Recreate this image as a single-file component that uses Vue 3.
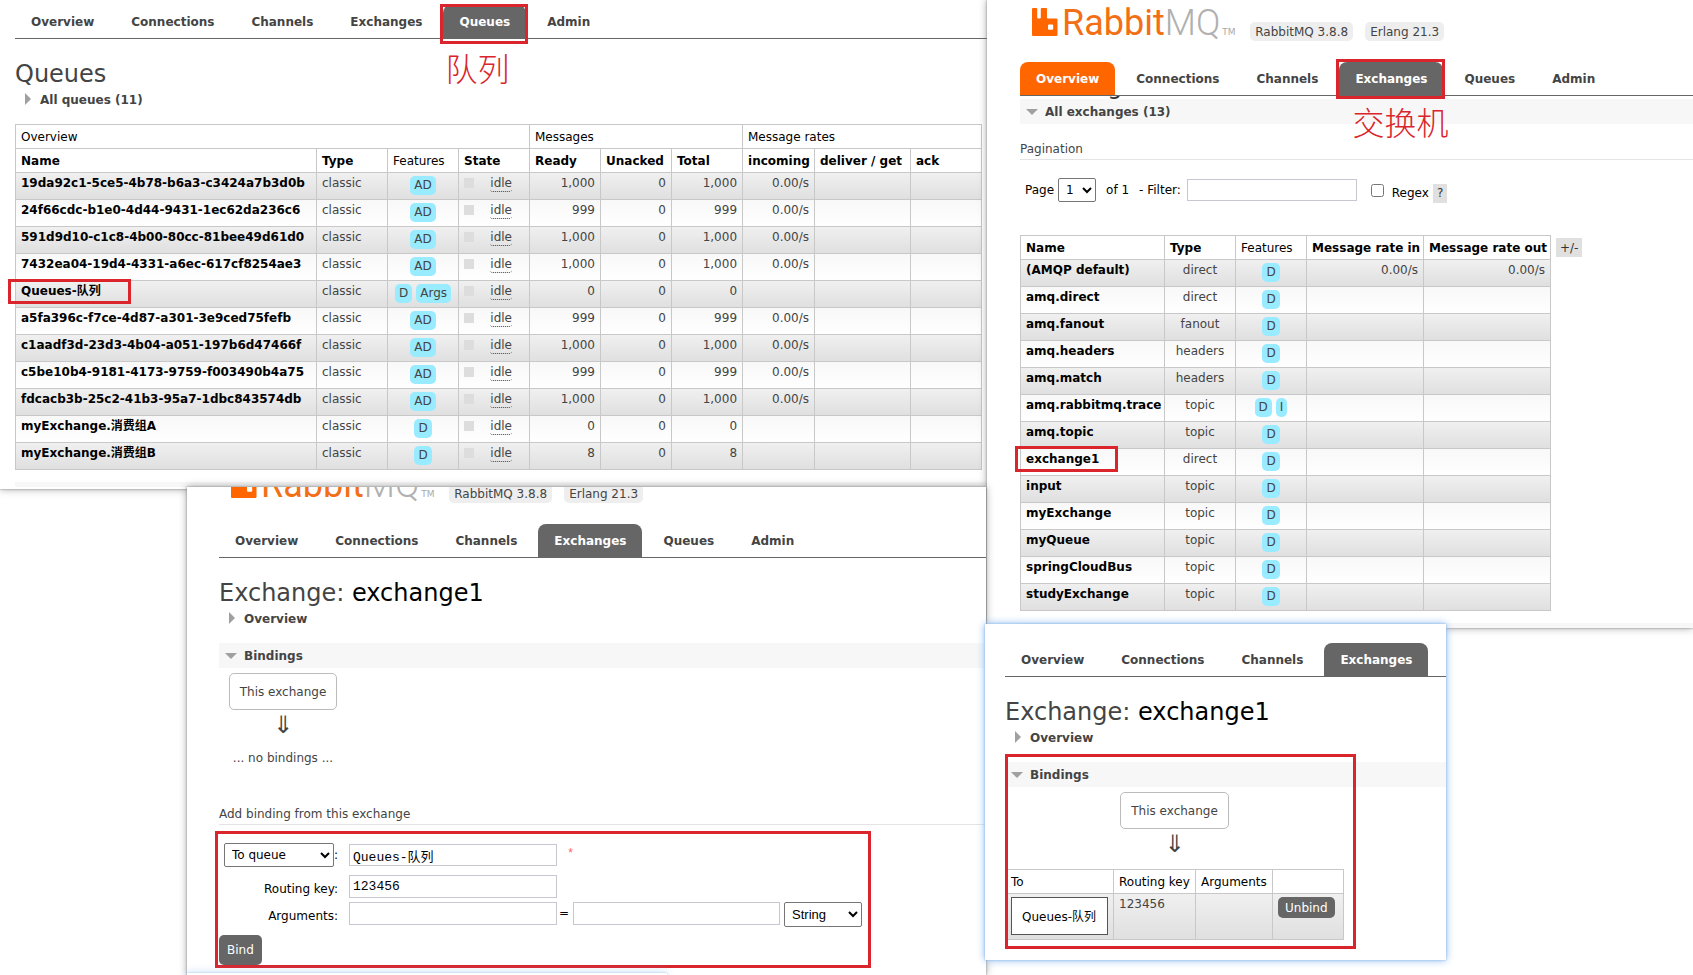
<script setup>
const allTabs = ['Overview', 'Connections', 'Channels', 'Exchanges', 'Queues', 'Admin']

const queueWidths = [301, 71, 71, 71, 71, 71, 71, 72, 96, 71]
const queues = [
  { name: '19da92c1-5ce5-4b78-b6a3-c3424a7b3d0b', tags: ['AD'], ready: '1,000', total: '1,000', rate: '0.00/s' },
  { name: '24f66cdc-b1e0-4d44-9431-1ec62da236c6', tags: ['AD'], ready: '999', total: '999', rate: '0.00/s' },
  { name: '591d9d10-c1c8-4b00-80cc-81bee49d61d0', tags: ['AD'], ready: '1,000', total: '1,000', rate: '0.00/s' },
  { name: '7432ea04-19d4-4331-a6ec-617cf8254ae3', tags: ['AD'], ready: '1,000', total: '1,000', rate: '0.00/s' },
  { name: 'Queues-队列', tags: ['D', 'Args'], ready: '0', total: '0', rate: '', marked: true },
  { name: 'a5fa396c-f7ce-4d87-a301-3e9ced75fefb', tags: ['AD'], ready: '999', total: '999', rate: '0.00/s' },
  { name: 'c1aadf3d-23d3-4b04-a051-197b6d47466f', tags: ['AD'], ready: '1,000', total: '1,000', rate: '0.00/s' },
  { name: 'c5be10b4-9181-4173-9759-f003490b4a75', tags: ['AD'], ready: '999', total: '999', rate: '0.00/s' },
  { name: 'fdcacb3b-25c2-41b3-95a7-1dbc843574db', tags: ['AD'], ready: '1,000', total: '1,000', rate: '0.00/s' },
  { name: 'myExchange.消费组A', tags: ['D'], ready: '0', total: '0', rate: '' },
  { name: 'myExchange.消费组B', tags: ['D'], ready: '8', total: '8', rate: '' },
]

const exchangeWidths = [144, 71, 71, 117, 127]
const exchanges = [
  { name: '(AMQP default)', type: 'direct', tags: ['D'], rate: '0.00/s' },
  { name: 'amq.direct', type: 'direct', tags: ['D'] },
  { name: 'amq.fanout', type: 'fanout', tags: ['D'] },
  { name: 'amq.headers', type: 'headers', tags: ['D'] },
  { name: 'amq.match', type: 'headers', tags: ['D'] },
  { name: 'amq.rabbitmq.trace', type: 'topic', tags: ['D', 'I'] },
  { name: 'amq.topic', type: 'topic', tags: ['D'] },
  { name: 'exchange1', type: 'direct', tags: ['D'], marked: true },
  { name: 'input', type: 'topic', tags: ['D'] },
  { name: 'myExchange', type: 'topic', tags: ['D'] },
  { name: 'myQueue', type: 'topic', tags: ['D'] },
  { name: 'springCloudBus', type: 'topic', tags: ['D'] },
  { name: 'studyExchange', type: 'topic', tags: ['D'] },
]

const bindingWidths = [108, 82, 77, 71]
</script>

<template>
  <main class="desk">
    <!-- Queue list -->
    <section class="win win-queues">
      <nav class="tabs">
        <a v-for="t in allTabs" :key="t" href="#" :class="{ on: t === 'Queues' }">{{ t }}
          <span v-if="t === 'Queues'" class="mark mark-tab"></span>
          <span v-if="t === 'Queues'" class="note">队列</span>
        </a>
      </nav>
      <h1>Queues</h1>
      <h2 class="section closed">All queues (11)</h2>
      <table class="list queue-list">
        <colgroup><col v-for="(w, i) in queueWidths" :key="i" :style="{ width: w + 'px' }"></colgroup>
        <thead>
          <tr><th class="thin" colspan="4">Overview</th><th class="thin" colspan="3">Messages</th><th class="thin" colspan="3">Message rates</th></tr>
          <tr>
            <th>Name</th><th>Type</th><th class="thin">Features</th><th>State</th><th>Ready</th>
            <th>Unacked</th><th>Total</th><th>incoming</th><th>deliver / get</th><th>ack</th>
          </tr>
        </thead>
        <tbody>
          <tr v-for="q in queues" :key="q.name">
            <td class="name"><a href="#">{{ q.name }}</a><span v-if="q.marked" class="mark mark-queue"></span></td>
            <td>classic</td>
            <td class="c"><span class="tags"><abbr v-for="g in q.tags" :key="g">{{ g }}</abbr></span></td>
            <td><span class="state"><i></i><span>idle</span></span></td>
            <td class="r">{{ q.ready }}</td>
            <td class="r">0</td>
            <td class="r">{{ q.total }}</td>
            <td class="r">{{ q.rate }}</td>
            <td></td>
            <td></td>
          </tr>
        </tbody>
      </table>
      <div class="strip"></div>
    </section>

    <!-- Exchange list -->
    <section class="win win-exchanges">
      <header class="brand">
        <svg class="rabbit" viewBox="0 0 26 28" aria-hidden="true">
          <path fill="#f60" fill-rule="evenodd" d="M1 0h3.2q1 0 1 1v8.500q0 1 1 1h1.600q1 0 1-1V1q0-1 1-1H14q1 0 1 1v8.500q0 1 1 1h8.500q1 0 1 1V27q0 1-1 1H1q-1 0-1-1V1q0-1 1-1ZM17 16.500q-1 0-1 1v3.200q0 1 1 1h3.200q1 0 1-1v-3.200q0-1-1-1Z" />
        </svg>
        <span class="word"><b>Rabbit</b>MQ</span><span class="tm">TM</span>
        <span class="pill">RabbitMQ 3.8.8</span>
        <span class="pill">Erlang 21.3</span>
      </header>
      <nav class="tabs">
        <a v-for="t in allTabs" :key="t" href="#" :class="{ on: t === 'Exchanges', hot: t === 'Overview' }">{{ t }}
          <span v-if="t === 'Exchanges'" class="mark mark-tab"></span>
          <span v-if="t === 'Exchanges'" class="note">交换机</span>
        </a>
      </nav>
      <div class="scrolled"><h1>Exchanges</h1></div>
      <h2 class="section open">All exchanges (13)</h2>
      <h3 class="pagination">Pagination</h3>
      <form class="pager" @submit.prevent>
        <label for="page">Page</label>
        <select id="page" class="page"><option>1</option></select>
        <span class="of">of 1</span>
        <label for="filter" class="filter-label">- Filter:</label>
        <input id="filter" class="filter" type="text">
        <input id="regex" class="tick" type="checkbox">
        <label for="regex" class="low">Regex</label>
        <button type="button" class="grey help">?</button>
      </form>
      <div class="with-toggle">
        <table class="list exchange-list">
          <colgroup><col v-for="(w, i) in exchangeWidths" :key="i" :style="{ width: w + 'px' }"></colgroup>
          <thead>
            <tr><th>Name</th><th>Type</th><th class="thin">Features</th><th>Message rate in</th><th>Message rate out</th></tr>
          </thead>
          <tbody>
            <tr v-for="x in exchanges" :key="x.name">
              <td class="name"><a href="#">{{ x.name }}</a><span v-if="x.marked" class="mark mark-exchange"></span></td>
              <td class="c">{{ x.type }}</td>
              <td class="c"><span class="tags"><abbr v-for="g in x.tags" :key="g">{{ g }}</abbr></span></td>
              <td class="r">{{ x.rate }}</td>
              <td class="r">{{ x.rate }}</td>
            </tr>
          </tbody>
        </table>
        <button type="button" class="grey">+/-</button>
      </div>
      <div class="strip"></div>
    </section>

    <!-- Exchange without bindings, with the binding form -->
    <section class="win win-bind">
      <div class="clip">
        <header class="brand">
          <svg class="rabbit" viewBox="0 0 26 28" aria-hidden="true">
            <path fill="#f60" fill-rule="evenodd" d="M1 0h3.2q1 0 1 1v8.500q0 1 1 1h1.600q1 0 1-1V1q0-1 1-1H14q1 0 1 1v8.500q0 1 1 1h8.500q1 0 1 1V27q0 1-1 1H1q-1 0-1-1V1q0-1 1-1ZM17 16.500q-1 0-1 1v3.200q0 1 1 1h3.200q1 0 1-1v-3.200q0-1-1-1Z" />
          </svg>
          <span class="word"><b>Rabbit</b>MQ</span><span class="tm">TM</span>
          <span class="pill">RabbitMQ 3.8.8</span>
          <span class="pill">Erlang 21.3</span>
        </header>
        <nav class="tabs">
          <a v-for="t in allTabs" :key="t" href="#" :class="{ on: t === 'Exchanges' }">{{ t }}</a>
        </nav>
        <h1>Exchange: <b>exchange1</b></h1>
        <h2 class="section closed">Overview</h2>
        <h2 class="section open gap">Bindings</h2>
        <div class="diagram diagram-left">
          <span class="node">This exchange</span>
          <span class="arrow">⇓</span>
          <span class="none">... no bindings ...</span>
        </div>
        <h3>Add binding from this exchange</h3>
        <form class="bind" @submit.prevent>
          <div class="grid">
            <span class="lead"><select aria-label="Destination type" class="dest"><option>To queue</option></select>:</span>
            <input type="text" class="first" aria-label="Destination" value="Queues-队列">
            <span class="star">*</span>
            <label for="key">Routing key:</label>
            <input id="key" class="tall" type="text" value="123456">
            <span></span>
            <label for="arg">Arguments:</label>
            <input id="arg" class="tall" type="text">
            <span class="pair"><span class="equals">=</span>
              <input type="text" class="tall" aria-label="Argument value">
              <select class="kind" aria-label="Argument type"><option>String</option></select>
            </span>
          </div>
          <button type="submit" class="dark">Bind</button>
          <span class="mark mark-form"></span>
        </form>
      </div>
    </section>

    <!-- Exchange with its binding -->
    <section class="win glow win-bound">
      <nav class="tabs">
        <a v-for="t in allTabs.slice(0, 4)" :key="t" href="#" :class="{ on: t === 'Exchanges' }">{{ t }}</a>
      </nav>
      <h1>Exchange: <b>exchange1</b></h1>
      <h2 class="section closed">Overview</h2>
      <h2 class="section open gap">Bindings</h2>
      <div class="diagram diagram-mid">
        <span class="node">This exchange</span>
        <span class="arrow">⇓</span>
        <table class="list binding-list">
          <colgroup><col v-for="(w, i) in bindingWidths" :key="i" :style="{ width: w + 'px' }"></colgroup>
          <thead>
            <tr><th class="thin">To</th><th class="thin">Routing key</th><th class="thin">Arguments</th><th></th></tr>
          </thead>
          <tbody>
            <tr>
              <td><a href="#" class="target">Queues-队列</a></td>
              <td>123456</td>
              <td></td>
              <td><button type="button" class="dark small">Unbind</button></td>
            </tr>
          </tbody>
        </table>
        <span class="mark mark-bound"></span>
      </div>
    </section>

    <div class="win glow win-edge"></div>
  </main>
</template>

<style>
body { margin: 0; background: #fff; overflow: hidden; }
</style>

<style scoped>
.desk {
  position: relative;
  height: 100vh;
  overflow: hidden;
  font: 12px/14px "DejaVu Sans", Verdana, "Noto Sans CJK SC", sans-serif;
  color: #444;
  background: #fff;
}
.desk * { box-sizing: border-box; }
a { color: inherit; text-decoration: none; }
button, select, input { font: inherit; margin: 0; }

.win { position: absolute; background: #fff; box-shadow: 0 0 2px #888, 0 0 8px rgba(0, 0, 0, 0.35); }
.glow { box-shadow: 0 0 2px #8ab8ec, 0 0 8px #86b6ee; }
.win-queues { left: 0; top: 0; width: 58.3%; height: 489px; padding: 5px 0 0 15px; overflow: hidden; }
.win-exchanges { left: 58.3%; right: 0; top: 0; padding-left: 33px; }
.win-bind { left: 187px; right: calc(41.7% + 1px); top: 487px; bottom: 0; }
.clip { height: 100%; overflow: hidden; padding-left: 32px; }
.clip .brand { margin-top: -25px; }
.win-bound { left: calc(58.3% - 2px); top: 624px; width: 461px; height: 336px; padding: 19px 0 0 20px; }
.win-edge { left: 187px; bottom: 0; width: 480px; height: 2px; }

/* Brand row */
.brand { display: flex; height: 62px; padding-left: 12px; }
.rabbit { width: 26px; height: 28px; margin-top: 8px; }
.word { margin: 6px 0 0 4px; font: 300 36px/34px Roboto, sans-serif; color: #b0b0b0; }
.word b { font-weight: 400; color: #f36f16; }
.tm { width: 28px; margin: 27px 0 0 2px; font: 9px/10px "DejaVu Sans", sans-serif; color: #aaa; }
.pill { height: 19px; margin: 22px 12px 0 0; padding: 0 5px; line-height: 20px; border-radius: 5px; background: #eee; white-space: nowrap; }

/* Tabs */
.tabs { position: relative; z-index: 1; display: flex; gap: 5px; border-bottom: 1px solid #666; }
.tabs a { position: relative; height: 33px; padding: 0 16px; line-height: 35px; font-weight: bold; border-radius: 8px 8px 0 0; white-space: nowrap; }
.tabs .on { background: #666; color: #fff; }
.tabs .hot { background: #f60; color: #fff; }

/* Annotations */
.mark { position: absolute; border: 3px solid #d9252b; pointer-events: none; }
.mark-tab { inset: -1px -2px -6px -3px; }
.win-exchanges .mark-tab { inset: -3px -2px -4px -3px; }
.note { position: absolute; left: 2px; top: 44px; font: 300 32px/36px "Noto Sans CJK SC", sans-serif; color: #d9252b; }
.win-exchanges .note { left: 13px; top: 41px; }
.mark-queue { left: -8px; top: -2px; width: 123px; height: 25px; }
.mark-exchange { left: -6px; top: -3px; width: 103px; height: 26px; }
.mark-form { left: -4px; top: 6px; width: 656px; height: 137px; }
.mark-bound { left: 0; top: -33px; width: 351px; height: 195px; }

/* Headings */
h1 { margin: 0; padding-top: 23px; font-size: 24px; line-height: 25px; font-weight: normal; }
h1 b { font-weight: normal; color: #000; }
h2 { position: relative; margin: 0; padding: 2px 0 0 25px; font-size: 12px; line-height: 23px; font-weight: bold; }
h2.open { background: #f7f7f7; }
h2.gap { margin-top: 12px; }
h2::before { content: ""; position: absolute; border: solid transparent; }
h2.closed::before { left: 10px; top: 6px; border-width: 6px 0 6px 6px; border-left-color: #a0a0a0; }
h2.open::before { left: 6px; top: 10px; border-width: 6px 6px 0 6px; border-top-color: #a0a0a0; }
h3 { margin: 0; padding-bottom: 2px; font-size: 12px; line-height: 16px; font-weight: normal; border-bottom: 1px solid #e4e4e4; }
.pagination { margin-top: 17px; }
.scrolled { display: flex; align-items: flex-end; height: 3px; overflow: hidden; }
.scrolled h1 { padding: 0; color: #333; }

/* Tables */
.list { table-layout: fixed; border-collapse: collapse; line-height: 14px; }
.list th, .list td { border: 1px solid #c8c8c8; padding: 0 5px; text-align: left; white-space: nowrap; }
.list th { height: 24px; color: #000; }
.list .thin { font-weight: normal; }
.list td { position: relative; height: 27px; padding-top: 3px; vertical-align: top; }
.list .name { font-weight: bold; color: #000; }
.list .c { text-align: center; }
.list .r { text-align: right; }
tbody tr:nth-child(odd) { background: linear-gradient(#f0f0f0, #dfdfdf); }
tbody tr:nth-child(even) { background: linear-gradient(#f8f8f8, #fff); }
.queue-list { width: 967px; margin-top: 12px; }
.exchange-list { width: 531px; }
.binding-list { width: 339px; }
.tags { display: flex; justify-content: center; gap: 4px; }
abbr { height: 19px; padding: 0 4px; line-height: 19px; border-radius: 5px; background: #99ebff; }
.state { display: flex; justify-content: space-between; padding: 0 12px 0 0; }
.state i { width: 10px; height: 10px; margin-top: 2px; background: #ddd; }
.state span { height: 16px; border-bottom: 1px dotted #444; border-radius: 3px; }
.strip { height: 5px; background: #f7f7f7; margin-top: 12px; }

/* Controls */
input[type="text"] { height: 22px; padding: 0 3px; border: 1px solid #c8c8d0; border-radius: 0; background: #fff; font-family: "Liberation Mono", "Noto Sans CJK SC", monospace; font-size: 13px; color: #000; }
select { height: 24px; padding: 0 0 0 3px; border: 1px solid #767676; border-radius: 2px; background: #fff; color: #000; }
.grey { height: 19px; padding: 0 4px; border: 0; background: #e0e0e0; color: #333; }
.dark { height: 30px; padding: 0 8px; border: 0; border-radius: 5px; background: #666; color: #fff; }
.dark.small { display: block; height: 21px; padding: 0 7px; }

.pager { display: flex; align-items: center; height: 24px; margin: 18px 0 33px 5px; color: #000; }
.page { width: 38px; margin: 0 10px 0 4px; }
.of { margin-right: 10px; }
.filter { width: 170px; margin: 0 14px 0 6px; }
.tick { width: 13px; height: 13px; margin-right: 8px; }
.low { margin-top: 6px; }
.help { margin: 6px 0 0 4px; }
.with-toggle { display: flex; align-items: flex-start; gap: 5px; }
.with-toggle .grey { margin-top: 3px; }

/* Binding diagram */
.diagram { position: relative; display: flex; flex-direction: column; align-items: center; padding-top: 5px; }
.diagram-left { width: 128px; height: 138px; }
.diagram-mid { width: 339px; }
.node { height: 37px; padding: 0 10px; line-height: 37px; border: 1px solid #bbb; border-radius: 5px; background: #fff; }
.arrow { height: 28px; font-size: 24px; line-height: 30px; }
.none { margin-top: 13px; white-space: nowrap; }
.diagram-mid .list { margin-top: 12px; }
.binding-list td:first-child { height: 46px; }
.target { display: block; height: 38px; padding: 0 10px; line-height: 38px; border: 1px solid #555; background: #fff; color: #000; }

/* Binding form */
.bind { position: relative; padding-top: 18px; color: #000; }
.grid { display: grid; grid-template-columns: 119px 208px auto; column-gap: 11px; grid-template-rows: 28px 23px 25px; row-gap: 4px; justify-content: start; align-items: start; }
.grid label { padding-top: 7px; text-align: right; }
.lead { display: flex; justify-content: flex-end; align-items: center; }
.dest { width: 110px; }
.first { margin-top: 1px; }
.kind { width: 78px; height: 25px; font-family: "Liberation Sans", Arial, sans-serif; font-size: 13px; }
.desk .tall { height: 23px; }
.star { padding-top: 4px; margin-left: -1px; font-family: "Liberation Mono", monospace; color: #f66; }
.pair { display: flex; align-items: flex-start; gap: 4px; margin-left: -9px; }
.equals { padding-top: 4px; }
.pair .tall { width: 207px; }
.bind .dark { display: block; margin-top: 8px; }
</style>
